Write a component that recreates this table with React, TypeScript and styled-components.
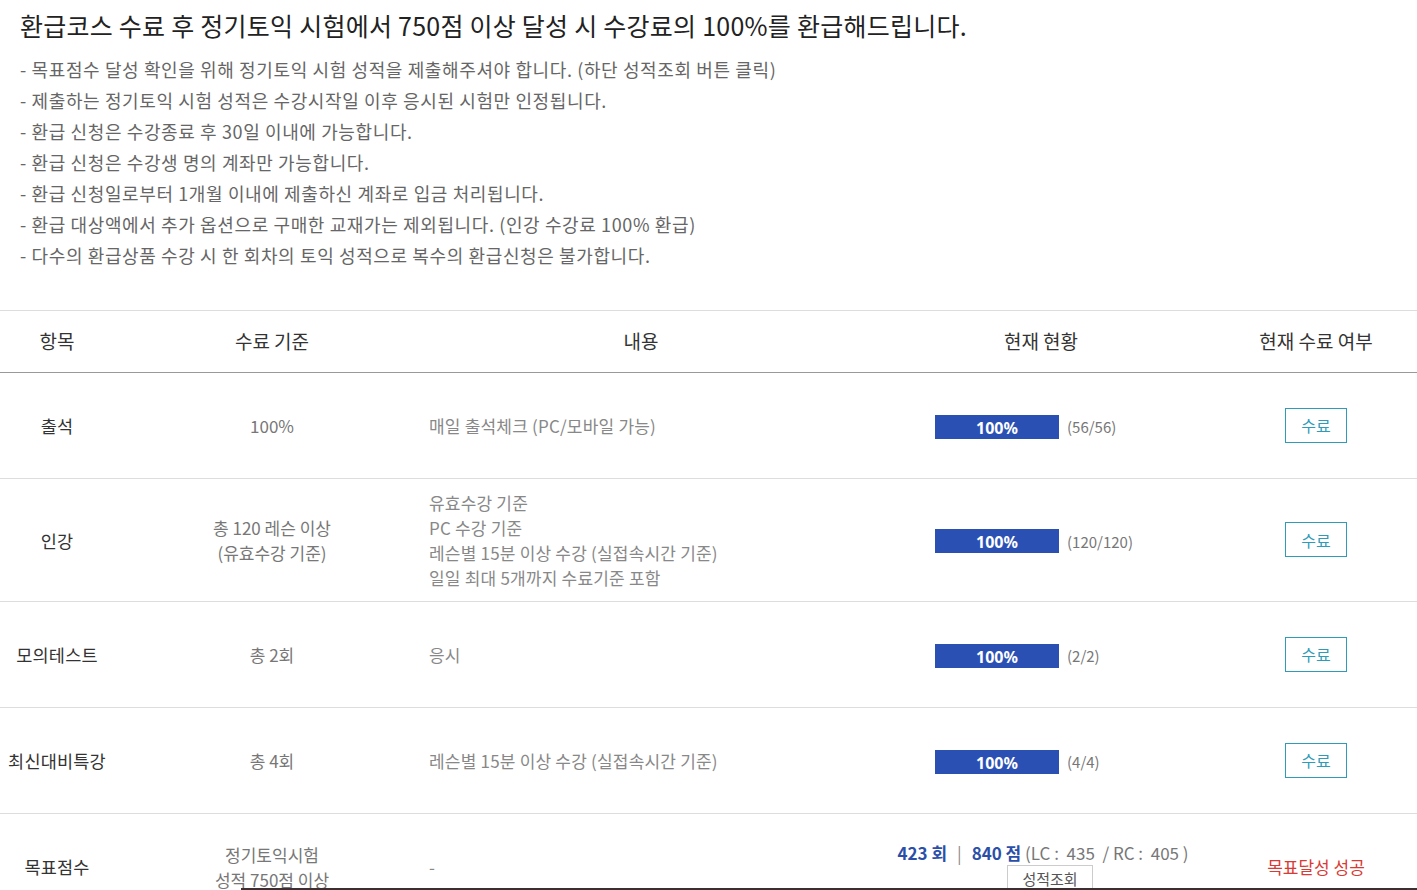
import React from "react";
import styled, { createGlobalStyle } from "styled-components";

const Global = createGlobalStyle`
  html, body { margin: 0; padding: 0; background: #fff; }
  body { font-family: "Noto Sans CJK KR", "Noto Sans", sans-serif; color: #333; }
`;

const Page = styled.div`
  width: 1417px;
  overflow: hidden;
`;

const Intro = styled.div`
  padding: 8px 0 0 20px;
`;

const Title = styled.h2`
  margin: 0;
  font-size: 25px;
  line-height: 34px;
  font-weight: 400;
  color: #222;
  letter-spacing: 0.25px;
`;

const Notes = styled.ul`
  list-style: none;
  margin: 12px 0 0;
  padding: 0;
`;

const Note = styled.li`
  font-size: 18px;
  line-height: 31px;
  color: #666;
  letter-spacing: 0.62px;
`;

const Table = styled.div`
  margin-top: 39px;
  border-top: 1px solid #ddd;
`;

const COLS = "114px 316px 422px 378px 172px";

const HeadRow = styled.div`
  display: grid;
  grid-template-columns: ${COLS};
  height: 61px;
  border-bottom: 1px solid #999;
  align-items: center;
`;

const HeadCell = styled.div`
  text-align: center;
  font-size: 19px;
  color: #333;
  padding-bottom: 2px;
`;

const Row = styled.div<{ $h: number }>`
  display: grid;
  grid-template-columns: ${COLS};
  min-height: ${(p) => p.$h}px;
  border-bottom: 1px solid #ddd;
  align-items: center;
`;

const NameCell = styled.div`
  text-align: center;
  font-size: 17.5px;
  letter-spacing: 0.2px;
  color: #333;
`;

const CritCell = styled.div`
  text-align: center;
  font-size: 17px;
  line-height: 25px;
  color: #777;
`;

const DescCell = styled.div`
  text-align: left;
  font-size: 17px;
  line-height: 25px;
  letter-spacing: 0.2px;
  color: #888;
  margin-left: -1px;
`;

const StatusCell = styled.div`
  display: flex;
  flex-direction: column;
  align-items: center;
`;

const ProgressWrap = styled.div`
  width: 212px;
  display: flex;
  align-items: center;
  gap: 8px;
  padding-top: 2px;
`;

const Bar = styled.div`
  width: 124px;
  height: 24px;
  background: #e5e5e5;
  overflow: hidden;
`;

const BarFill = styled.div`
  height: 100%;
  background: #2a50b4;
  display: flex;
  align-items: center;
  justify-content: center;
  padding-top: 2px;
  box-sizing: border-box;
  color: #fff;
  font-weight: 700;
  font-size: 16px;
  font-family: "Noto Sans", "Noto Sans CJK KR", sans-serif;
`;

const Count = styled.span`
  font-size: 15px;
  color: #777;
`;

const DoneCell = styled.div`
  display: flex;
  justify-content: center;
`;

const DoneButton = styled.button`
  width: 62px;
  height: 35px;
  margin-top: -1px;
  border: 1px solid #2e9bb8;
  background: #fff;
  color: #2e9bb8;
  font-family: inherit;
  font-size: 16px;
  padding: 0;
  cursor: pointer;
`;

const ScoreLine = styled.div`
  font-size: 17px;
  line-height: 24px;
  color: #777;
  white-space: pre;
  margin-left: 4px;
`;

const Strong = styled.b`
  color: #2b4fa8;
  font-weight: 700;
`;

const Sep = styled.span`
  color: #888;
  margin: 0 10px;
`;

const LookupButton = styled.button`
  width: 86px;
  height: 28px;
  margin-left: 18px;
  border: 1px solid #ccc;
  background: #fff;
  color: #555;
  font-family: inherit;
  font-size: 15px;
  padding: 0;
`;

const Success = styled.div`
  text-align: center;
  color: #d93a34;
  font-size: 17px;
`;

const BottomStrip = styled.div`
  position: fixed;
  left: 241px;
  right: 0;
  bottom: 0;
  height: 2px;
  background: #3b2f31;
`;

const notes = [
  "- 목표점수 달성 확인을 위해 정기토익 시험 성적을 제출해주셔야 합니다. (하단 성적조회 버튼 클릭)",
  "- 제출하는 정기토익 시험 성적은 수강시작일 이후 응시된 시험만 인정됩니다.",
  "- 환급 신청은 수강종료 후 30일 이내에 가능합니다.",
  "- 환급 신청은 수강생 명의 계좌만 가능합니다.",
  "- 환급 신청일로부터 1개월 이내에 제출하신 계좌로 입금 처리됩니다.",
  "- 환급 대상액에서 추가 옵션으로 구매한 교재가는 제외됩니다. (인강 수강료 100% 환급)",
  "- 다수의 환급상품 수강 시 한 회차의 토익 성적으로 복수의 환급신청은 불가합니다.",
];

type R = { name: string; crit: string[]; desc: string[]; pct: number; count: string; h: number };

const rows: R[] = [
  { name: "출석", crit: ["100%"], desc: ["매일 출석체크 (PC/모바일 가능)"], pct: 100, count: "(56/56)", h: 105 },
  {
    name: "인강",
    crit: ["총 120 레슨 이상", "(유효수강 기준)"],
    desc: ["유효수강 기준", "PC 수강 기준", "레슨별 15분 이상 수강 (실접속시간 기준)", "일일 최대 5개까지 수료기준 포함"],
    pct: 100,
    count: "(120/120)",
    h: 122,
  },
  { name: "모의테스트", crit: ["총 2회"], desc: ["응시"], pct: 100, count: "(2/2)", h: 105 },
  { name: "최신대비특강", crit: ["총 4회"], desc: ["레슨별 15분 이상 수강 (실접속시간 기준)"], pct: 100, count: "(4/4)", h: 105 },
];

export default function App() {
  return (
    <Page>
      <Global />
      <Intro>
        <Title>환급코스 수료 후 정기토익 시험에서 750점 이상 달성 시 수강료의 100%를 환급해드립니다.</Title>
        <Notes>
          {notes.map((n) => (
            <Note key={n}>{n}</Note>
          ))}
        </Notes>
      </Intro>
      <Table>
        <HeadRow>
          <HeadCell>항목</HeadCell>
          <HeadCell>수료 기준</HeadCell>
          <HeadCell>내용</HeadCell>
          <HeadCell>현재 현황</HeadCell>
          <HeadCell>현재 수료 여부</HeadCell>
        </HeadRow>
        {rows.map((r) => (
          <Row key={r.name} $h={r.h}>
            <NameCell>{r.name}</NameCell>
            <CritCell>
              {r.crit.map((c) => (
                <div key={c}>{c}</div>
              ))}
            </CritCell>
            <DescCell>
              {r.desc.map((d) => (
                <div key={d}>{d}</div>
              ))}
            </DescCell>
            <StatusCell>
              <ProgressWrap>
                <Bar>
                  <BarFill style={{ width: `${r.pct}%` }}>{r.pct}%</BarFill>
                </Bar>
                <Count>{r.count}</Count>
              </ProgressWrap>
            </StatusCell>
            <DoneCell>
              <DoneButton>수료</DoneButton>
            </DoneCell>
          </Row>
        ))}
        <Row $h={105}>
          <NameCell>목표점수</NameCell>
          <CritCell>
            <div>정기토익시험</div>
            <div>성적 750점 이상</div>
          </CritCell>
          <DescCell>-</DescCell>
          <StatusCell>
            <ScoreLine>
              <Strong>423 회</Strong>
              <Sep>|</Sep>
              <Strong>840 점</Strong> (LC :  435  / RC :  405 )
            </ScoreLine>
            <LookupButton>성적조회</LookupButton>
          </StatusCell>
          <Success>목표달성 성공</Success>
        </Row>
      </Table>
      <BottomStrip />
    </Page>
  );
}
